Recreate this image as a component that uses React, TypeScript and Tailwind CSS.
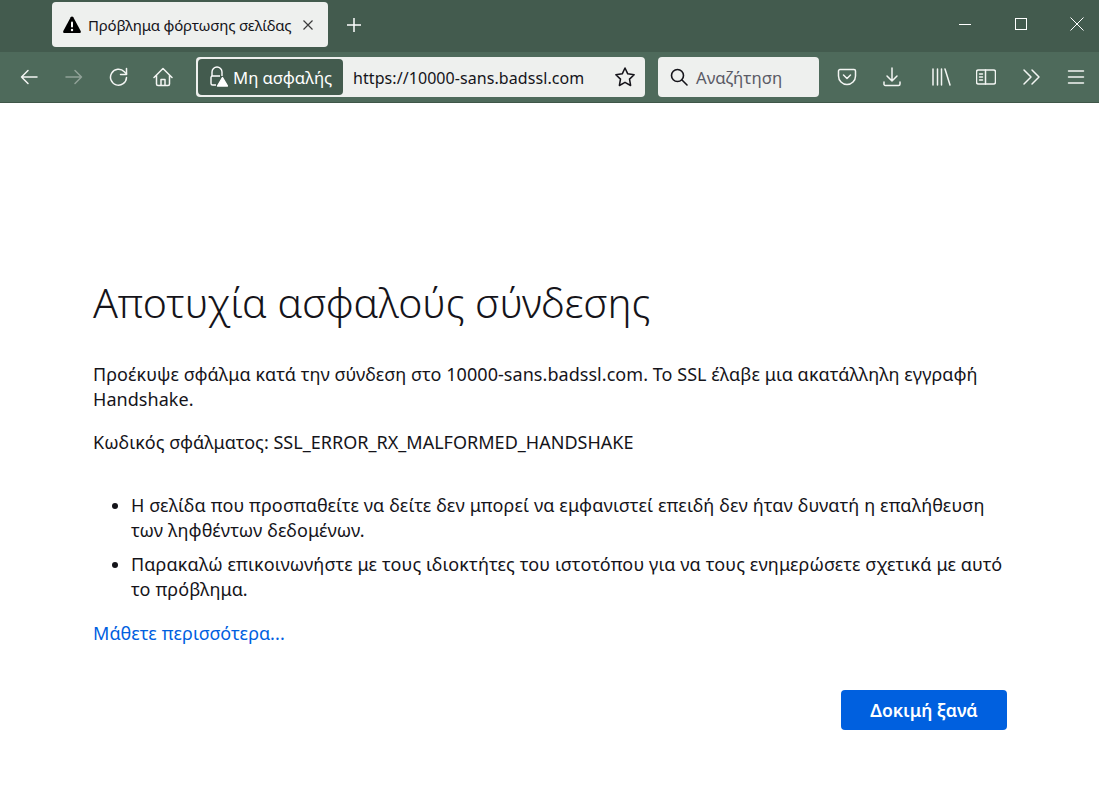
import React from "react";

const ui = "font-['Noto_Sans',sans-serif]";

const ToolIcon = ({ children, className = "" }: { children: React.ReactNode; className?: string }) => (
  <svg
    viewBox="0 0 20 20"
    fill="none"
    stroke="currentColor"
    strokeWidth="1.5"
    strokeLinecap="round"
    strokeLinejoin="round"
    className={`h-5 w-5 ${className}`}
  >
    {children}
  </svg>
);

const App = () => {
  return (
    <div className={`flex h-[804px] w-[1099px] flex-col overflow-hidden bg-white ${ui}`}>
      {/* Tab strip */}
      <div className="flex h-[52px] items-start bg-[#435b4e] pl-[52px]">
        <div className="mt-[2px] flex h-[45px] w-[276px] items-center rounded bg-[#eef0ee] pl-[10px] pr-[14px] text-[#15141a]">
          <svg viewBox="0 0 20 20" className="h-5 w-5 shrink-0">
            <path d="M10 1.5c.6 0 1 .3 1.3.8l7.4 13.6c.5 1-.1 2.1-1.2 2.1H2.5c-1.1 0-1.7-1.1-1.2-2.1L8.7 2.3c.3-.5.7-.8 1.3-.8z" fill="#000" />
            <rect x="9" y="6.5" width="2" height="6" rx="1" fill="#fff" />
            <circle cx="10" cy="15" r="1.2" fill="#fff" />
          </svg>
          <span className="ml-[6px] mt-[2px] whitespace-nowrap text-[15px] leading-none tracking-[-0.2px]">Πρόβλημα φόρτωσης σελίδας</span>
          <svg viewBox="0 0 12 12" className="ml-auto h-3 w-3 text-[#3b3b3b]" fill="none" stroke="currentColor" strokeWidth="1.2">
            <path d="M1.5 1.5l9 9M10.5 1.5l-9 9" />
          </svg>
        </div>
        <svg viewBox="0 0 16 16" className="ml-[18px] mt-[17px] h-4 w-4 text-white" fill="none" stroke="currentColor" strokeWidth="1.5">
          <path d="M8 1v14M1 8h14" />
        </svg>
        <div className="ml-auto flex h-[48px] items-center gap-[42px] pr-[15px] text-white">
          <div className="flex w-[14px] justify-center">
            <div className="h-px w-[12px] bg-white" />
          </div>
          <div className="flex w-[14px] justify-center">
            <div className="h-[12px] w-[12px] border border-white" />
          </div>
          <svg viewBox="0 0 14 14" className="h-[14px] w-[14px]" fill="none" stroke="currentColor" strokeWidth="1">
            <path d="M.5.5l13 13M13.500.5l-13 13" />
          </svg>
        </div>
      </div>

      {/* Toolbar */}
      <div className="flex h-[51px] items-center border-b border-[#3f5648] bg-[#4e6a5b] text-[#f3f5f3]">
        <div className="flex w-[196px] items-center pl-[19px]">
          <ToolIcon>
            <path d="M18 10H2.500M9 3.500L2.500 10 9 16.500" />
          </ToolIcon>
          <ToolIcon className="ml-[25px] opacity-40">
            <path d="M2 10h15.500M11 3.500l6.500 6.500-6.500 6.500" />
          </ToolIcon>
          <ToolIcon className="ml-[25px]">
            <path d="M17.500 10.500a8 8 0 1 1-2.200-5.800L17.500 7" />
            <path d="M17.500 1.500V7.500H11.500" />
          </ToolIcon>
          <ToolIcon className="ml-[24px]">
            <path d="M1 10.500l9-9 9 9M3.500 8.500V17a1.500 1.500 0 0 0 1.500 1.500h10a1.500 1.500 0 0 0 1.500-1.500V8.500M8 18.500v-6h4v6" />
          </ToolIcon>
        </div>

        <div className="flex h-[40px] w-[449px] items-center rounded bg-[#eef0ee] pl-[2px] pr-[9px]">
          <div className="flex h-[36px] w-[145px] items-center rounded bg-[#435b4e] pl-[10px] text-white">
            <svg viewBox="0 0 20 22" className="h-[22px] w-5 shrink-0" fill="none" stroke="currentColor" strokeWidth="1.4">
              <path d="M4 10V6a5 5 0 0 1 10 0v4" />
              <path d="M8 19H4.500A1.500 1.500 0 0 1 3 17.500v-6A1.500 1.500 0 0 1 4.500 10H12" />
              <path d="M14.500 11.500l5 8.500h-10z" fill="currentColor" strokeLinejoin="round" />
            </svg>
            <span className="ml-[5px] mt-[2px] whitespace-nowrap text-[16.700px]">Μη ασφαλής</span>
          </div>
          <span className="ml-[10px] mt-[2px] whitespace-nowrap text-[16px] tracking-[0.07px] text-[#15141a]">https://10000-sans.badssl.com</span>
          <svg viewBox="0 0 20 20" className="ml-auto h-[22px] w-[22px] text-[#15141a]" fill="none" stroke="currentColor" strokeWidth="1.4" strokeLinejoin="round">
            <path d="M10 1.800l2.500 5.300 5.800.8-4.200 4 1 5.800-5.100-2.800-5.100 2.800 1-5.800-4.200-4 5.800-.8z" />
          </svg>
        </div>

        <div className="ml-[13px] flex h-[40px] w-[161px] items-center rounded bg-[#eef0ee] pl-[11px]">
          <svg viewBox="0 0 20 20" className="h-5 w-5 text-[#15141a]" fill="none" stroke="currentColor" strokeWidth="1.6" strokeLinecap="round">
            <circle cx="8.500" cy="8.500" r="6" />
            <path d="M13 13l5 5" />
          </svg>
          <span className="ml-[7px] mt-[2px] text-[16.800px] text-[#5b5b66]">Αναζήτηση</span>
        </div>

        <div className="ml-[18px] flex items-center">
          <ToolIcon>
            <path d="M3 2.500h14A1.500 1.500 0 0 1 18.500 4v5a8.500 8.500 0 0 1-17 0V4A1.500 1.500 0 0 1 3 2.500z" />
            <path d="M6.500 8l3.500 3.500L13.500 8" />
          </ToolIcon>
          <ToolIcon className="ml-[25px]">
            <path d="M10 1v13M5 9l5 5 5-5M2 15v1.500A1.500 1.500 0 0 0 3.500 18.500h13a1.500 1.500 0 0 0 1.500-1.500V15" />
          </ToolIcon>
          <ToolIcon className="ml-[29px]">
            <path d="M2 2v16M6.500 2v16M10.500 2v16M14 2l5 16" />
          </ToolIcon>
          <ToolIcon className="ml-[25px]">
            <rect x="0.500" y="3" width="19" height="14" rx="2" />
            <path d="M9.500 3v14M3.500 7h3M3.500 10h3M3.500 13h3" />
          </ToolIcon>
          <ToolIcon className="ml-[25px]">
            <path d="M3 3l7 7-7 7M11 3l7 7-7 7" />
          </ToolIcon>
          <ToolIcon className="ml-[25px]">
            <path d="M2.500 4h15M2.500 10h15M2.500 16h15" />
          </ToolIcon>
        </div>
      </div>

      {/* Error page */}
      <main className="flex-1 pl-[93px] pt-[170px] text-[#15141a]">
        <div className="w-[914px]">
          <h1 className="text-[41px] font-light leading-[58px] tracking-[-0.12px]">Αποτυχία ασφαλούς σύνδεσης</h1>
          <p className="mt-[31px] text-[18px] leading-[25px] tracking-[0.05px]">
            Προέκυψε σφάλμα κατά την σύνδεση στο 10000-sans.badssl.com. Το SSL έλαβε μια ακατάλληλη εγγραφή Handshake.
          </p>
          <p className="mt-[18px] text-[18px] leading-[25px] tracking-[0.02px]">Κωδικός σφάλματος: SSL_ERROR_RX_MALFORMED_HANDSHAKE</p>
          <ul className="mt-[38px] list-disc pl-[38px] text-[18px] leading-[25px] tracking-[0.12px]">
            <li>Η σελίδα που προσπαθείτε να δείτε δεν μπορεί να εμφανιστεί επειδή δεν ήταν δυνατή η επαλήθευση των ληφθέντων δεδομένων.</li>
            <li className="mt-[9px]">Παρακαλώ επικοινωνήστε με τους ιδιοκτήτες του ιστοτόπου για να τους ενημερώσετε σχετικά με αυτό το πρόβλημα.</li>
          </ul>
          <a className="mt-[19px] block text-[18px] leading-[25px] tracking-[0.1px] text-[#0060df]">Μάθετε περισσότερα...</a>
          <div className="mt-[44px] flex justify-end">
            <button className="h-[40px] w-[166px] rounded bg-[#0060df] text-[17.600px] font-semibold text-white">Δοκιμή ξανά</button>
          </div>
        </div>
      </main>
    </div>
  );
};

export default App;
